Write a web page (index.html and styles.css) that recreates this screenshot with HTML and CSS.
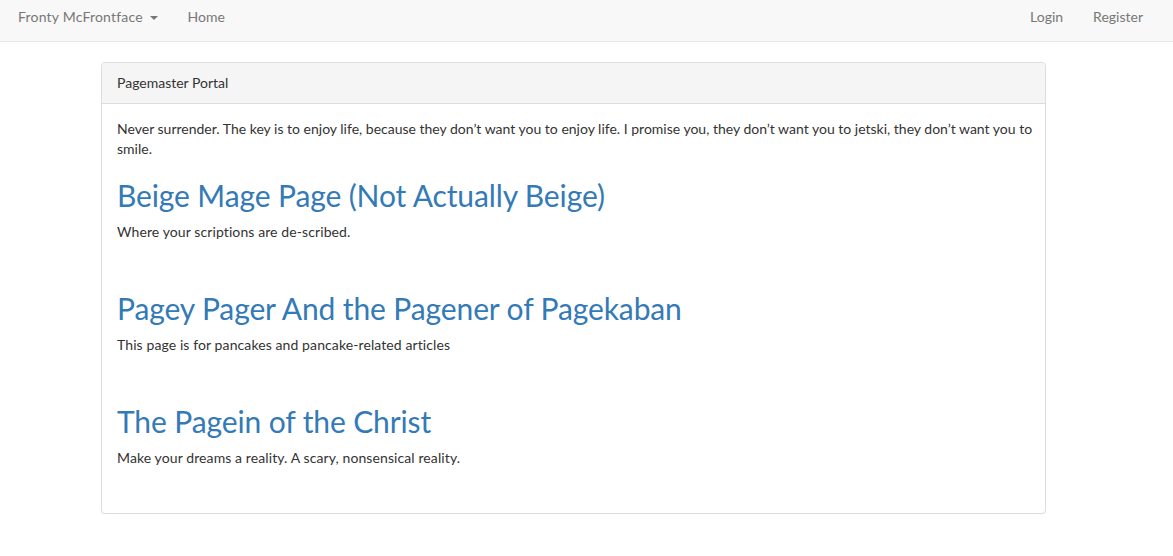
FILE: index.html
```html
<!DOCTYPE html>
<html>
<head>
<meta charset="utf-8">
<title>Pagemaster Portal</title>
<link rel="stylesheet" href="styles.css">
</head>
<body>
<nav class="navbar">
  <ul class="nav">
    <li><a href="#" class="dropdown-toggle">Fronty McFrontface <span class="caret"></span></a></li>
    <li><a href="#">Home</a></li>
  </ul>
  <ul class="nav nav-right">
    <li><a href="#">Login</a></li>
    <li><a href="#">Register</a></li>
  </ul>
</nav>
<main class="page">
  <section class="panel">
    <div class="panel-heading">Pagemaster Portal</div>
    <div class="panel-body">
      <p>Never surrender. The key is to enjoy life, because they don’t want you to enjoy life. I promise you, they don’t want you to jetski, they don’t want you to smile.</p>
      <div class="item">
        <a href="#"><h2>Beige Mage Page (Not Actually Beige)</h2></a>
        <p>Where your scriptions are de-scribed.</p>
        <br>
      </div>
      <div class="item">
        <a href="#"><h2>Pagey Pager And the Pagener of Pagekaban</h2></a>
        <p>This page is for pancakes and pancake-related articles</p>
        <br>
      </div>
      <div class="item">
        <a href="#"><h2>The Pagein of the Christ</h2></a>
        <p>Make your dreams a reality. A scary, nonsensical reality.</p>
        <br>
      </div>
    </div>
  </section>
</main>
</body>
</html>
```
FILE: styles.css
```css
* { box-sizing: border-box; }
html, body { margin: 0; padding: 0; }
body {
  font-family: Lato, "Helvetica Neue", Arial, sans-serif;
  font-size: 14px;
  line-height: 20px;
  color: #333;
  background: #fff;
}
a { text-decoration: none; color: #337ab7; }

.navbar {
  display: flex;
  justify-content: space-between;
  height: 42px;
  background: #f8f8f8;
  border-bottom: 1px solid #e7e7e7;
  padding: 0 15px 0 3px;
}
.nav {
  list-style: none;
  margin: 0;
  padding: 0;
  display: flex;
}
.nav a {
  display: block;
  padding: 7px 15px 14px;
  color: #777;
  line-height: 20px;
}
.nav .dropdown-toggle { letter-spacing: 0.2px; }
.caret {
  display: inline-block;
  width: 0;
  height: 0;
  margin-left: 3px;
  vertical-align: middle;
  border-top: 4px solid #777;
  border-left: 4px solid transparent;
  border-right: 4px solid transparent;
}

.page {
  width: 945px;
  margin: 20px 0 0 101px;
}
.panel {
  border: 1px solid #ddd;
  border-radius: 4px;
  box-shadow: 0 1px 1px rgba(0,0,0,0.05);
  background: #fff;
}
.panel-heading {
  background: #f5f5f5;
  border-bottom: 1px solid #ddd;
  padding: 10px 15px;
  border-radius: 3px 3px 0 0;
  color: #333;
}
.panel-body {
  padding: 15px 10px 15px 15px;
}
.panel-body p { margin: 0 0 10px; }
.item p { letter-spacing: 0.1px; }
.panel-body h2 {
  font-size: 30px;
  font-weight: 400;
  line-height: 33px;
  margin: 20px 0 10px;
  color: #337ab7;
  letter-spacing: -0.12px;
}
```
